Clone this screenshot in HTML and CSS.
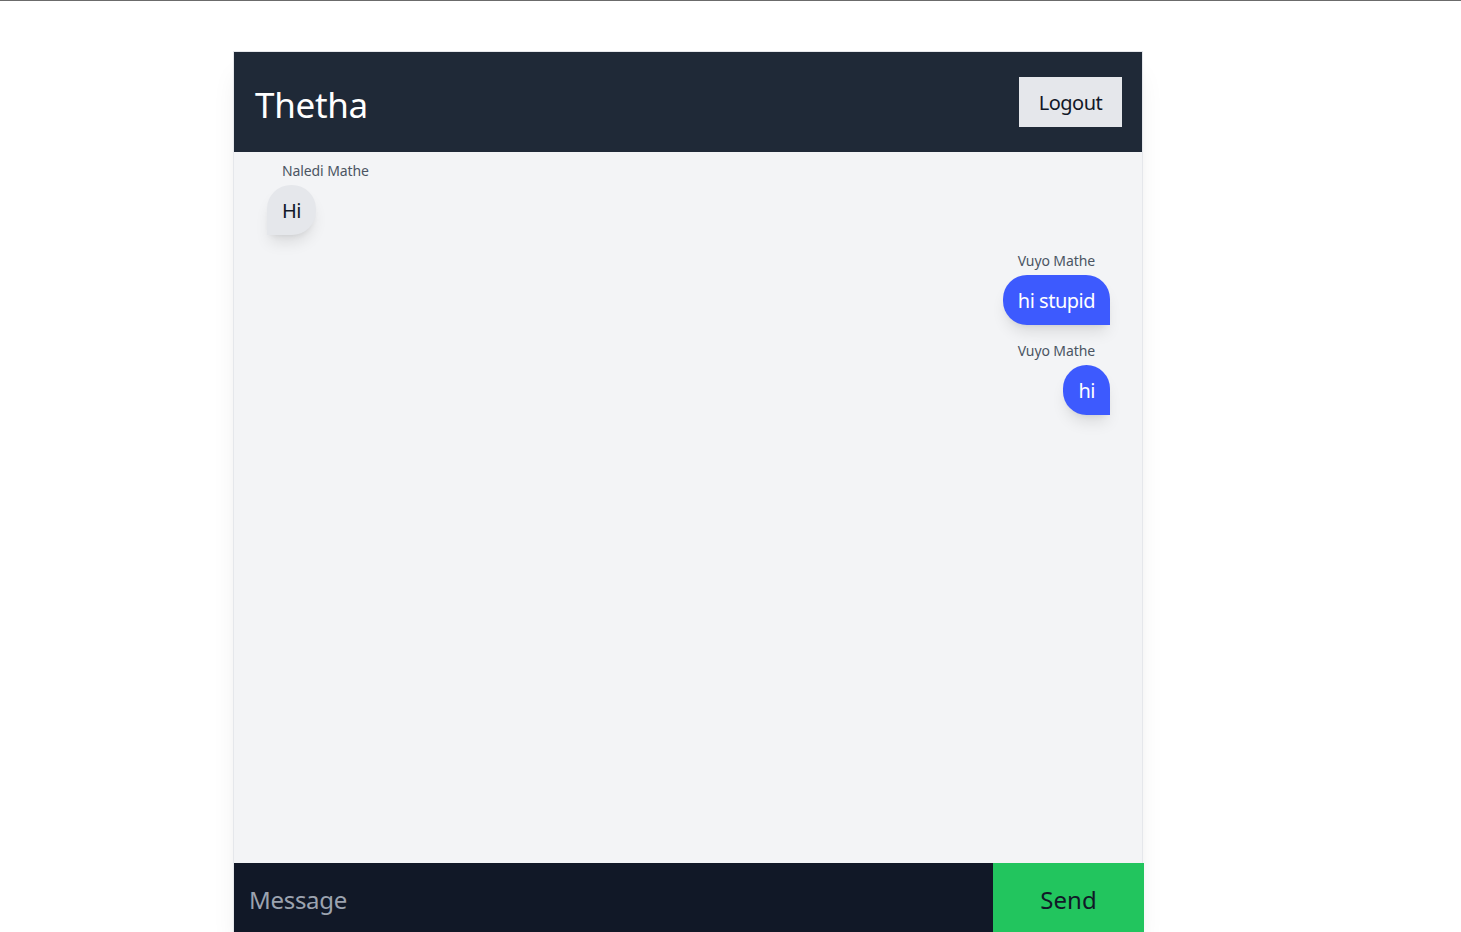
FILE: index.html
```html
<!DOCTYPE html>
<html lang="en">
<head>
<meta charset="utf-8">
<title>Thetha</title>
<link rel="stylesheet" href="styles.css">
</head>
<body>
<div class="app">
  <header class="topbar">
    <h1 class="brand">Thetha</h1>
    <button class="logout" type="button">Logout</button>
  </header>
  <main class="messages">
    <div class="msg msg-in">
      <span class="sender">Naledi Mathe</span>
      <p class="bubble">Hi</p>
    </div>
    <div class="msg msg-out">
      <span class="sender">Vuyo Mathe</span>
      <p class="bubble">hi stupid</p>
    </div>
    <div class="msg msg-out">
      <span class="sender">Vuyo Mathe</span>
      <p class="bubble">hi</p>
    </div>
  </main>
  <form class="composer">
    <input class="composer-input" type="text" placeholder="Message">
    <button class="send" type="button">Send</button>
  </form>
</div>
</body>
</html>
```
FILE: styles.css
```css
* { box-sizing: border-box; }
html, body { height: 100%; }
body {
  margin: 0;
  border-top: 1px solid #6b6b6b;
  background: #ffffff;
  font-family: "Segoe UI", "Noto Sans", "Open Sans", sans-serif;
  overflow: hidden;
}
.app {
  margin: 50px 0 0 233px;
  width: 910px;
  border: 1px solid #e5e7eb;
  border-bottom: none;
  display: flex;
  flex-direction: column;
  box-shadow: 0 20px 25px -5px rgba(0,0,0,0.08), 0 8px 10px -6px rgba(0,0,0,0.08);
}
.topbar {
  height: 100px;
  background: #1f2937;
  display: flex;
  align-items: center;
  justify-content: space-between;
  padding: 0 20px 0 21px;
}
.brand {
  margin: 0;
  padding-top: 5px;
  color: #ffffff;
  font-size: 35px;
  font-weight: 400;
  line-height: 40px;
  letter-spacing: -0.3px;
}
.logout {
  width: 103px;
  height: 50px;
  padding: 2px 0 0;
  border: none;
  background: #e5e7eb;
  color: #111827;
  font-family: inherit;
  font-size: 20px;
  line-height: 28px;
  letter-spacing: -0.5px;
}
.messages {
  height: 711px;
  background: #f3f4f6;
  padding: 9px 32px 0 33px;
  display: flex;
  flex-direction: column;
}
.msg {
  display: flex;
  flex-direction: column;
  margin-bottom: 16px;
}
.msg-in { align-items: flex-start; }
.msg-out { align-items: flex-end; }
.sender {
  font-size: 14px;
  line-height: 20px;
  color: #4b5563;
  padding: 0 15px;
  letter-spacing: -0.1px;
}
.bubble {
  margin: 4px 0 0;
  height: 50px;
  padding: 2px 15px 0;
  font-size: 20px;
  line-height: 48px;
  letter-spacing: -0.5px;
  border-radius: 24px;
  box-shadow: 0 10px 15px -3px rgba(0,0,0,0.1), 0 4px 6px -4px rgba(0,0,0,0.1);
}
.msg-in .bubble {
  background: #e5e7eb;
  color: #111827;
  border-bottom-left-radius: 0;
}
.msg-out .bubble {
  background: #3d5afe;
  color: #ffffff;
  border-bottom-right-radius: 0;
}
.composer {
  display: flex;
  height: 69px;
  width: 911px;
  margin-left: -1px;
  padding-left: 1px;
  background: transparent;
}
.composer-input {
  flex: 1;
  min-width: 0;
  border: none;
  outline: none;
  background: #111827;
  color: #ffffff;
  font-family: inherit;
  font-size: 24px;
  letter-spacing: -0.3px;
  padding: 4px 15px 0;
}
.composer-input::placeholder { color: #9ca3af; }
.send {
  width: 151px;
  border: none;
  background: #22c55e;
  color: #111827;
  font-family: inherit;
  font-size: 24px;
  padding: 4px 0 0;
}
```
